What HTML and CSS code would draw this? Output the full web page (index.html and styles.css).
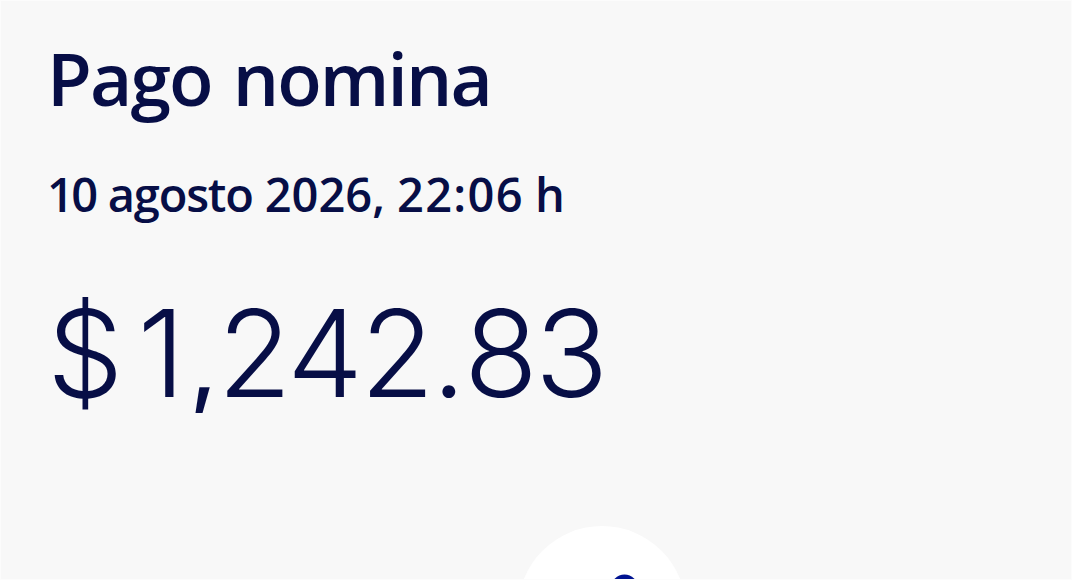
FILE: index.html
```html
<!DOCTYPE html>
<html lang="es">
<head>
     <meta charset="UTF-8">
     <title>Pago nomina</title>
     <link rel="stylesheet" href="styles.css">
</head>
<body>
     <div id="detail">
          <h1 class="title">Pago nomina</h1>
          <p class="date"><span class="day">10</span> <span class="month">agosto</span> <span class="year">2026,</span> <span class="time">22:06</span> <span>h</span></p>
          <p class="amount"><span class="currency">$</span><span class="one">1</span><span class="comma">,</span><span class="digits">242</span><span class="point">.</span><span class="digits">83</span></p>
          <div class="actions">
               <a class="action">
                    <svg width="168" height="53" viewBox="0 0 168 53">
                         <circle cx="84" cy="84" r="84" fill="#ffffff"/>
                         <circle cx="106.5" cy="62" r="13.5" fill="#001391"/>
                    </svg>
               </a>
          </div>
     </div>
</body>
</html>
```
FILE: styles.css
```css
body{
     margin: 0px;
     background: #fff;
     font-family: "Open Sans", "Noto Sans", sans-serif;
     color: #070e46;
}
#detail{
     box-sizing: border-box;
     width: 1072px;
     height: 580px;
     overflow: hidden;
     padding: 35px 46px 0;
     border: 1px solid #fcfcfc;
     background: #f8f8f8;
     display: flex;
     flex-direction: column;
}
.title{
     margin: 0px;
     height: 90px;
     line-height: 84px;
     font-size: 73px;
     font-weight: 620;
     letter-spacing: -1.9px;
     word-spacing: 4px;
     white-space: nowrap;
}
.date{
     margin: 0px;
     margin-top: 38px;
     height: 60px;
     line-height: 60px;
     font-size: 47px;
     font-weight: 600;
     white-space: nowrap;
     display: flex;
}
.date span{
     margin-right: 12px;
}
.date .day{
     letter-spacing: -2.5px;
}
.date .month{
     letter-spacing: -1.2px;
}
.date .time{
     letter-spacing: 1.3px;
     margin-right: 11px;
}
.amount{
     margin: 0px;
     margin-top: 57px;
     height: 144px;
     line-height: 144px;
     font-family: Inter, "Open Sans", sans-serif;
     font-size: 121px;
     font-weight: 330;
     white-space: nowrap;
     display: flex;
     align-items: baseline;
}
.currency{
     margin-right: 14px;
}
.comma{
     margin-left: 5px;
     font-size: 90px;
     font-weight: 450;
     letter-spacing: 0px;
}
.digits{
     letter-spacing: -2.8px;
}
.point{
     letter-spacing: -2px;
}
.actions{
     margin-top: auto;
     padding-left: 471px;
     display: flex;
}
.action svg{
     display: block;
}
```
